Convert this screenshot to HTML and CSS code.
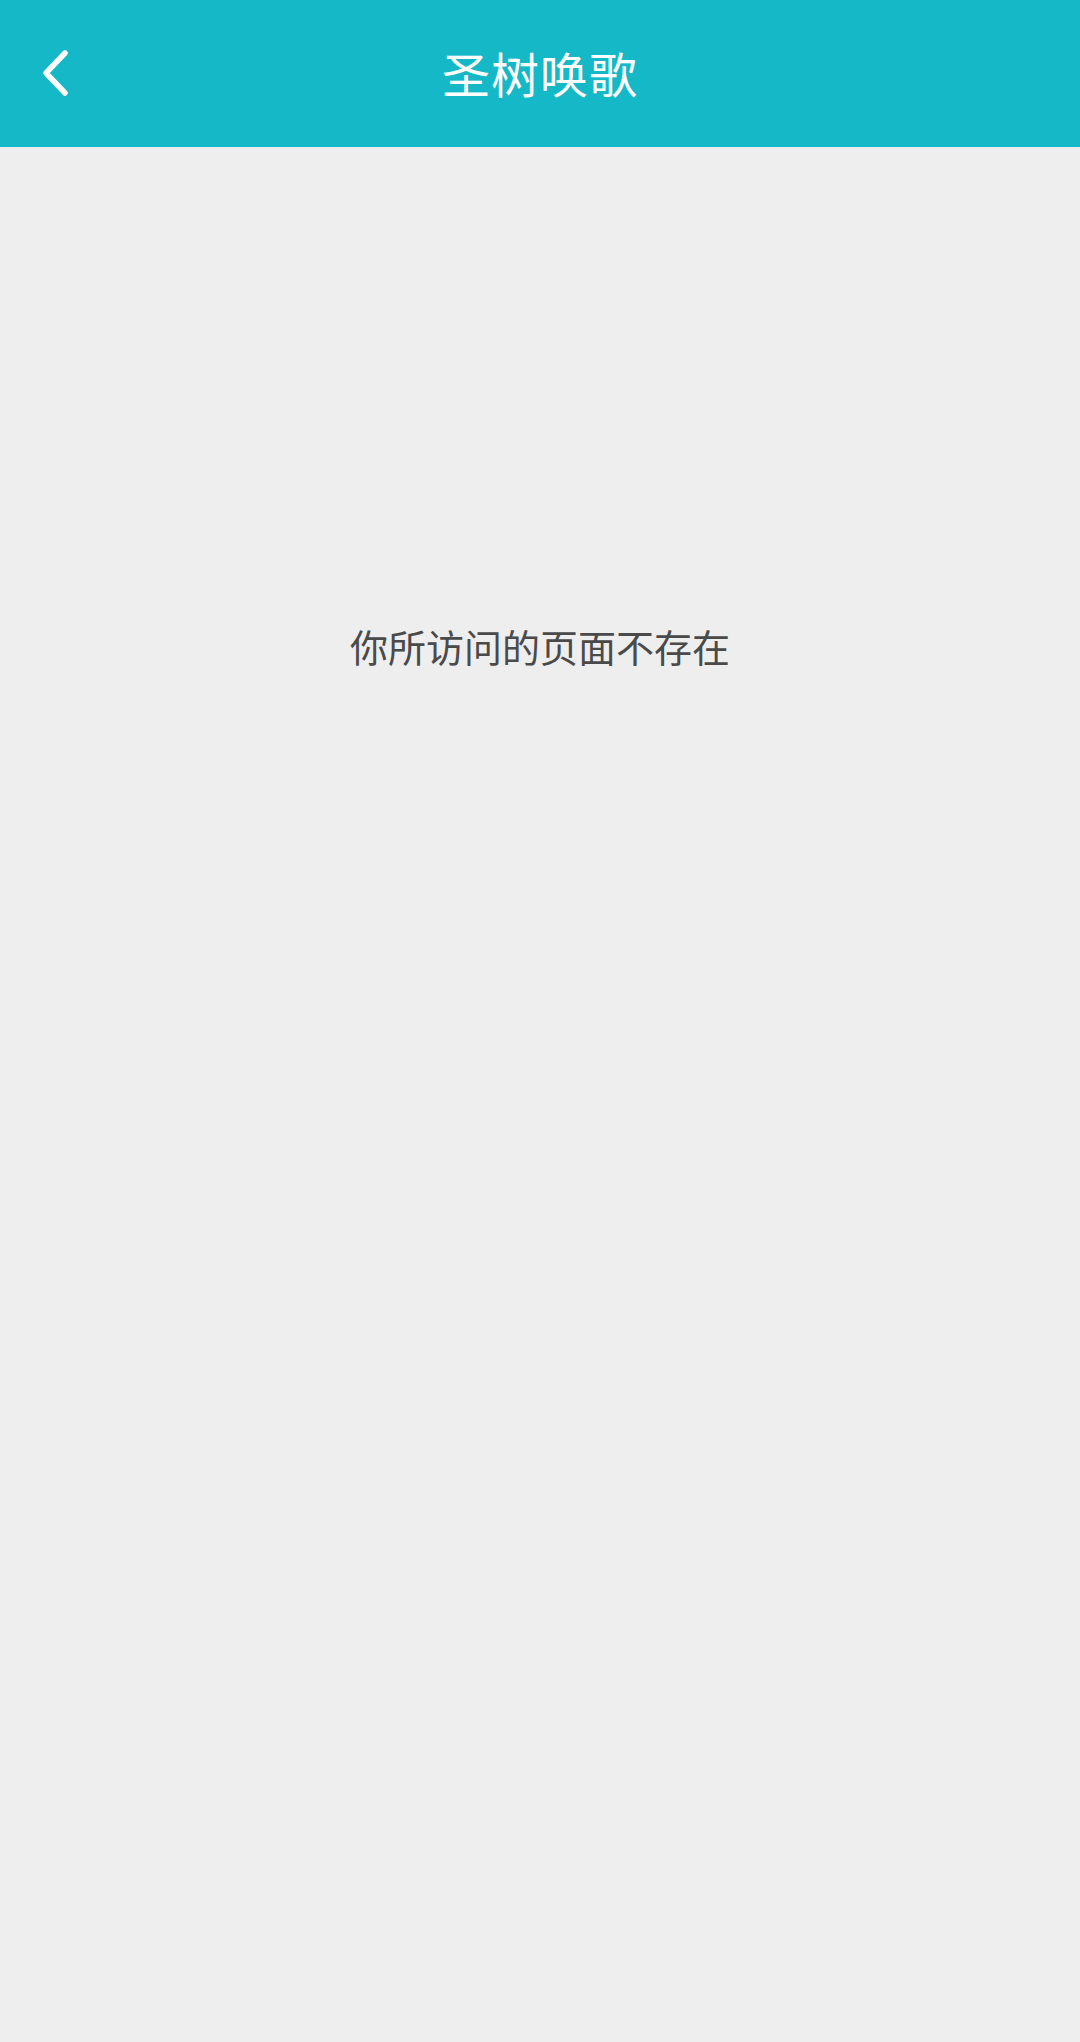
FILE: index.html
```html
<!DOCTYPE html>
<html lang="zh-CN">
<head>
<meta charset="utf-8">
<title>圣树唤歌</title>
<link rel="stylesheet" href="styles.css">
</head>
<body>
<header class="topbar">
  <a class="back" href="#" aria-label="返回">
    <svg width="40" height="60" viewBox="0 0 40 60"><path d="M26 9 L7 29 L26 49" fill="none" stroke="#fff" stroke-width="5.5" stroke-linecap="round" stroke-linejoin="round"/></svg>
  </a>
  <h1 class="title">圣树唤歌</h1>
</header>
<main class="content">
  <p class="message">你所访问的页面不存在</p>
</main>
</body>
</html>
```
FILE: styles.css
```css
html, body {
  margin: 0;
  padding: 0;
}
body {
  width: 1080px;
  height: 2042px;
  background: #eeeeee;
  font-family: "Noto Sans CJK SC", "Noto Sans", sans-serif;
  display: flex;
  flex-direction: column;
}
.topbar {
  position: relative;
  height: 147px;
  background: #14b8c6;
  display: flex;
  align-items: center;
  justify-content: center;
  flex-shrink: 0;
}
.back {
  position: absolute;
  left: 39px;
  top: 44px;
  display: block;
  width: 40px;
  height: 60px;
}
.back svg { display: block; }
.title {
  margin: -4px 0 0;
  color: #ffffff;
  font-size: 48px;
  font-weight: 400;
  line-height: 1;
  letter-spacing: 1px;
}
.content {
  flex: 1;
  display: flex;
  justify-content: center;
  padding-top: 468px;
}
.message {
  margin: 0;
  color: #4a4a4a;
  font-size: 38px;
  line-height: 62px;
  height: 62px;
}
```
